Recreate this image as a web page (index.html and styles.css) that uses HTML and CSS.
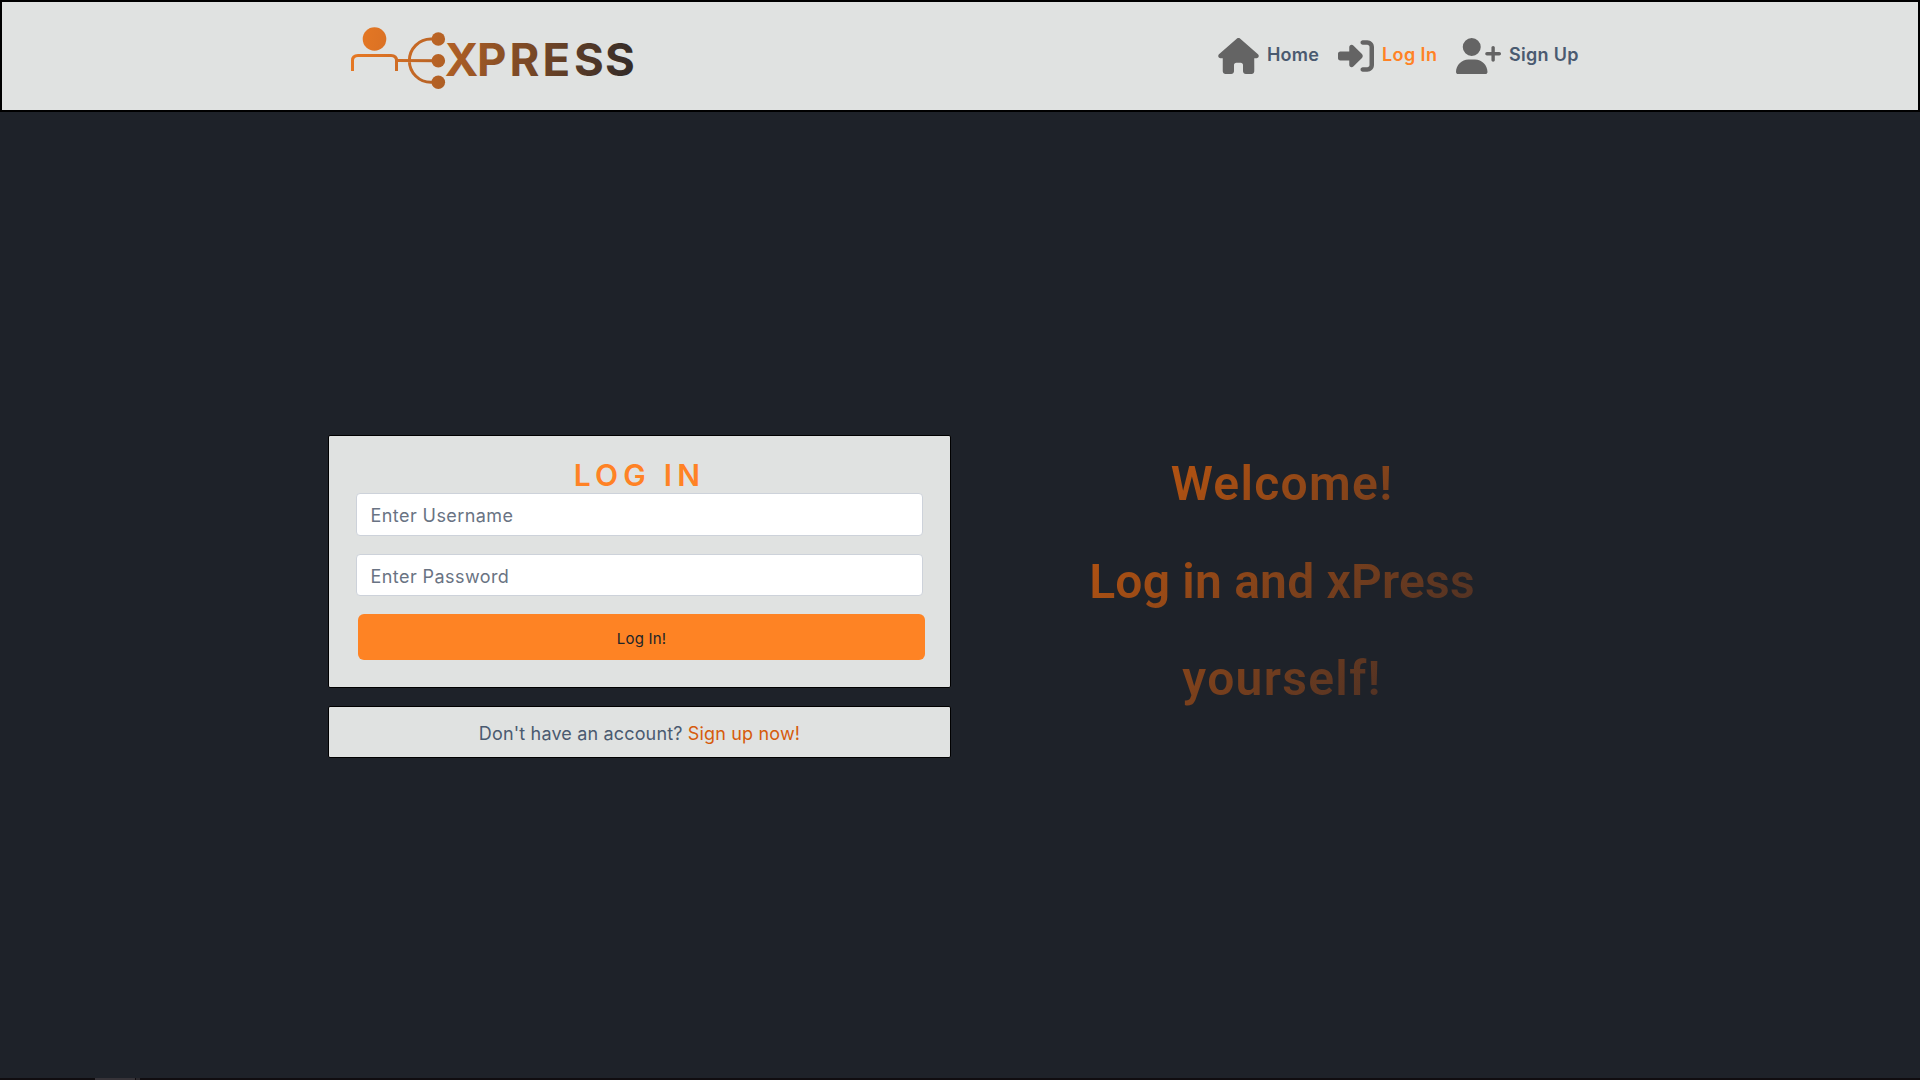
FILE: index.html
```html
<!DOCTYPE html>
<html lang="en">
<head>
<meta charset="utf-8">
<title>xPress - Log In</title>
<link rel="stylesheet" href="styles.css">
</head>
<body>
<header class="header">
  <a class="logo" href="#" aria-label="xPress">
    <svg width="290" height="66" viewBox="350 24 290 66">
      <defs>
        <linearGradient id="brand" gradientUnits="userSpaceOnUse" x1="352" y1="20" x2="640" y2="85">
          <stop offset="0" stop-color="#e87a24"/>
          <stop offset=".12" stop-color="#dc7224"/>
          <stop offset="1" stop-color="#2c2828"/>
        </linearGradient>
      </defs>
      <g fill="none" stroke="url(#brand)" stroke-width="3">
        <path d="M352.500 71V60.500Q352.500 55.500 358 55.500H391Q396.500 55.500 396.500 60.500V71"/>
        <path d="M397 60.600L438 60.700M438 39H431A21.650 21.650 0 0 0 431 82.300H438"/>
      </g>
      <g fill="url(#brand)">
        <circle cx="374.500" cy="39" r="11.800"/>
        <circle cx="438.300" cy="39" r="6.800"/>
        <circle cx="438.300" cy="60.700" r="6.800"/>
        <circle cx="438.300" cy="82.300" r="6.800"/>
        <text class="logo-text" y="76" x="444.800 477 509.500 542.500 574 605">XPRESS</text>
      </g>
    </svg>
  </a>
  <nav class="nav">
    <a class="nav-link" href="#">
      <svg class="icon" width="41" height="36" viewBox="0 0 576 512"><path d="M575.8 255.5c0 18-15 32.1-32 32.1l-32 0 .7 160.2c0 2.700-.2 5.400-.5 8.100l0 16.200c0 22.100-17.900 40-40 40l-16 0c-1.100 0-2.200 0-3.300-.1c-1.400 .1-2.800 .1-4.200 .1L416 512l-24 0c-22.100 0-40-17.900-40-40l0-24 0-64c0-17.700-14.300-32-32-32l-64 0c-17.700 0-32 14.300-32 32l0 64 0 24c0 22.100-17.900 40-40 40l-24 0-31.900 0c-1.500 0-3-.1-4.500-.2c-1.200 .1-2.400 .2-3.600 .2l-16 0c-22.100 0-40-17.900-40-40l0-112c0-.9 0-1.900 .1-2.800l0-69.700-32 0c-18 0-32-14-32-32.100c0-9 3-17 10-24L266.400 8c7-7 15-8 22-8s15 2 21 7L564.800 231.500c8 7 12 15 11 24z"/></svg>
      <span class="label home">Home</span>
    </a>
    <a class="nav-link active" href="#">
      <svg class="icon" width="36" height="36" viewBox="0 0 512 512"><path d="M217.900 105.900L340.700 228.700c7.200 7.200 11.300 17.100 11.300 27.300s-4.100 20.100-11.300 27.300L217.900 406.100c-6.400 6.400-15 9.900-24 9.900c-18.700 0-33.900-15.200-33.900-33.900l0-62.100L32 320c-17.700 0-32-14.300-32-32l0-64c0-17.700 14.300-32 32-32l128 0 0-62.100c0-18.700 15.200-33.900 33.900-33.900c9 0 17.600 3.600 24 9.900zM352 416l64 0c17.700 0 32-14.300 32-32l0-256c0-17.700-14.300-32-32-32l-64 0c-17.700 0-32-14.300-32-32s14.300-32 32-32l64 0c53 0 96 43 96 96l0 256c0 53-43 96-96 96l-64 0c-17.700 0-32-14.300-32-32s14.300-32 32-32z"/></svg>
      <span class="label login">Log In</span>
    </a>
    <a class="nav-link" href="#">
      <svg class="icon" width="45" height="36" viewBox="0 0 640 512"><path d="M96 128a128 128 0 1 1 256 0A128 128 0 1 1 96 128zM0 482.300C0 383.800 79.800 304 178.300 304l91.400 0C368.200 304 448 383.800 448 482.300c0 16.400-13.300 29.700-29.700 29.700L29.700 512C13.300 512 0 498.700 0 482.300zM504 312l0-64-64 0c-13.300 0-24-10.700-24-24s10.700-24 24-24l64 0 0-64c0-13.300 10.700-24 24-24s24 10.700 24 24l0 64 64 0c13.300 0 24 10.700 24 24s-10.700 24-24 24l-64 0 0 64c0 13.300-10.700 24-24 24s-24-10.700-24-24z"/></svg>
      <span class="label signup">Sign Up</span>
    </a>
  </nav>
</header>
<main class="main">
  <div class="forms">
    <section class="card login-card">
      <h1 class="title">LOG IN</h1>
      <input class="field" type="text" placeholder="Enter Username" aria-label="Username">
      <input class="field password" type="password" placeholder="Enter Password" aria-label="Password">
      <button class="submit" type="button">Log In!</button>
    </section>
    <section class="card signup-card">Don't have an account? <a class="signup-link" href="#">Sign up now!</a></section>
  </div>
  <h2 class="welcome"><span class="loose">Welcome!</span><br>Log in and xPress<br><span class="loose">yourself!</span></h2>
</main>
<footer class="strip"><span class="strip-tab"></span><span class="strip-end"></span></footer>
</body>
</html>
```
FILE: styles.css
```css
* { box-sizing: border-box; }
body {
  margin: 0;
  height: 1080px;
  display: flex;
  flex-direction: column;
  overflow: hidden;
  background: #1e2229;
  color: #4a5a70;
  font-family: Inter, sans-serif;
  font-size: 18px;
}
a { text-decoration: none; color: inherit; }
.header {
  height: 112px;
  flex: none;
  border: 2px solid #000;
  background: #e0e2e1;
  padding: 0 339px 0 348px;
  display: flex;
  justify-content: space-between;
}
.logo { padding-top: 22px; }
.logo svg { display: block; }
.logo-text { font: 700 45.5px Inter, sans-serif; }
.nav { display: flex; gap: 20px; padding-top: 35px; height: 73px; }
.nav-link { display: flex; align-items: center; gap: 8px; font-weight: 600; white-space: nowrap; }
.nav-link.active { color: #ff8225; }
.icon { flex: none; fill: #646464; }
.label { line-height: 36px; padding-bottom: 2px; letter-spacing: .2px; }
.home { width: 51px; }
.login { width: 54px; letter-spacing: .4px; }
.signup { width: 70px; letter-spacing: .3px; }
.main { flex: 1; display: flex; align-items: flex-start; padding: 323px 0 0 328px; }
.forms { width: 623px; display: flex; flex-direction: column; gap: 18px; }
.card { background: #e0e2e1; border: 1px solid #000; border-radius: 2px; }
.login-card { height: 253px; padding: 20px 27px 0; display: flex; flex-direction: column; }
.title {
  margin: 0;
  height: 37px;
  line-height: 39px;
  text-align: center;
  font-size: 30px;
  font-weight: 600;
  letter-spacing: 5.2px;
  color: #ff8225;
}
.field {
  flex: none;
  width: 567px;
  height: 43px;
  border: 1px solid #cdd2da;
  border-radius: 4px;
  padding: 1px 13.5px 0;
  background: #fff;
  font: 18px Inter, sans-serif;
  letter-spacing: .43px;
}
.field::placeholder { color: #697383; opacity: 1; }
.password { margin-top: 18px; height: 42px; padding-top: 3px; }
.submit {
  flex: none;
  width: 567px;
  height: 46px;
  margin: 18px 0 0 2px;
  border: 0;
  border-radius: 6px;
  padding: 3px 0 0;
  background: #fe8324;
  color: #212529;
  font: 15px Inter, sans-serif;
  letter-spacing: .2px;
}
.signup-card { height: 52px; line-height: 53px; text-align: center; white-space: nowrap; letter-spacing: .16px; }
.signup-link { color: #d65b0c; }
.welcome {
  margin: 0 0 0 115px;
  width: 432px;
  text-align: center;
  font: 600 48px/97.5px Roboto, sans-serif;
  letter-spacing: .2px;
  color: transparent;
  background: linear-gradient(135deg, #cf5c0c, #32282a);
  -webkit-background-clip: text;
  background-clip: text;
}
.loose { letter-spacing: 1.3px; }
.strip { flex: none; height: 2px; background: #100d10; display: flex; gap: 1px; padding-left: 95px; }
.strip-tab { width: 40px; background: #363338; }
.strip-end { width: 4px; background: #2a282c; }
```
